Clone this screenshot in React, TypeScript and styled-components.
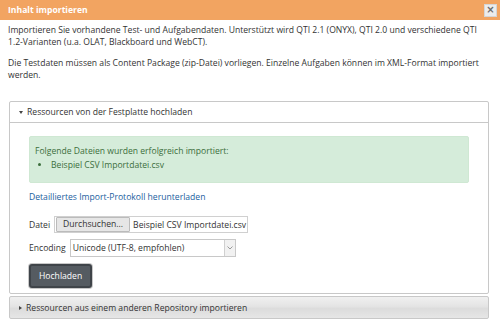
import React from "react";
import styled, { createGlobalStyle } from "styled-components";

const Global = createGlobalStyle`
  html, body { margin: 0; padding: 0; background: #fff; }
  body { font-family: "Open Sans", "DejaVu Sans", sans-serif; font-size: 8.6px; color: #333; }
`;

const Dialog = styled.div`
  width: 500px;
  height: 331px;
  background: #fff;
  overflow: hidden;
`;

const Header = styled.div`
  height: 20px;
  background: #f2a461;
  display: flex;
  align-items: center;
  justify-content: space-between;
  padding: 0 3px 0 8px;
`;

const Title = styled.h3`
  margin: 0;
  font-size: 8.6px;
  font-weight: 700;
  color: #fff;
  line-height: 20px;
`;

const CloseBtn = styled.button`
  width: 13px;
  height: 13px;
  padding: 0;
  border: 1px solid #d6d6d6;
  background: #ececec;
  color: #6a6a6a;
  font-size: 10px;
  font-weight: 700;
  line-height: 10px;
  font-family: "DejaVu Sans", sans-serif;
  display: flex;
  align-items: center;
  justify-content: center;
`;

const Body = styled.div`
  padding: 4px 8px 0 8px;
`;

const Para = styled.p`
  margin: 0 0 9px 0;
  line-height: 12px;
`;

const Panel = styled.div<{ $collapsed?: boolean }>`
  margin: ${(p) => (p.$collapsed ? "2px 3px 0 1px" : "20px 3px 0 1px")};
  border: 1px solid #c8c8c8;
  border-radius: 2px;
  background: ${(p) =>
    p.$collapsed ? "linear-gradient(#f0f0f0, #e4e4e4 45%, #dcdcdc 55%, #e6e6e6)" : "#fff"};
`;

const PanelHead = styled.div<{ $collapsed?: boolean }>`
  height: ${(p) => (p.$collapsed ? "21px" : "20px")};
  display: flex;
  align-items: center;
  gap: 4px;
  padding: 0 9px;
  border-bottom: ${(p) => (p.$collapsed ? "none" : "1px solid #c8c8c8")};
  color: #333;
`;

const Caret = styled.span<{ $right?: boolean }>`
  display: inline-block;
  width: 0;
  height: 0;
  ${(p) =>
    p.$right
      ? `border-top: 2.5px solid transparent; border-bottom: 2.5px solid transparent; border-left: 3px solid #444;`
      : `border-left: 2.5px solid transparent; border-right: 2.5px solid transparent; border-top: 3px solid #444;`}
`;

const PanelBody = styled.div`
  padding: 13px 19px 5px 19px;
`;

const Alert = styled.div`
  background: #d5ecda;
  border: 1px solid #cfe8d3;
  border-radius: 2px;
  color: #3c6e3c;
  padding: 7px 4px 10px 5px;
  line-height: 14px;
`;

const AlertList = styled.ul`
  margin: 0;
  padding-left: 16px;
  list-style: disc;
`;

const Link = styled.a`
  display: block;
  margin-top: 7px;
  color: #215e9e;
  text-decoration: none;
  line-height: 14px;
`;

const FormRow = styled.div<{ $top: number }>`
  display: flex;
  align-items: center;
  gap: 4px;
  margin-top: ${(p) => p.$top}px;
`;

const Label = styled.span`
  color: #333;
`;

const FileBox = styled.div`
  display: flex;
  align-items: center;
  height: 15px;
  border: 1px solid #d0d0d0;
  padding: 0 1px 0 1px;
  gap: 3px;
  background: #fff;
`;

const FileButton = styled.span`
  height: 13px;
  line-height: 13px;
  padding: 0 6px;
  background: #e6e6e6;
  border: 1px solid #bbb;
  border-radius: 1px;
  color: #333;
`;

const Select = styled.div`
  width: 162px;
  height: 16px;
  border: 1px solid #c8c8c8;
  display: flex;
  align-items: center;
  justify-content: space-between;
  padding-left: 2px;
  background: #fff;
`;

const SelectArrow = styled.span`
  width: 10px;
  height: 16px;
  border-left: 1px solid #d0d0d0;
  background: #f1f1f1;
  display: flex;
  align-items: center;
  justify-content: center;
`;

const SubmitBtn = styled.button`
  margin-top: 7px;
  height: 24px;
  padding: 0 8px;
  background: #555b61;
  color: #fff;
  font-family: "Open Sans", sans-serif;
  font-size: 8.6px;
  border: 2px solid #3f4449;
  border-radius: 3px;
  box-shadow: 0 0 0 1px #c8c8c8;
`;

export default function App() {
  return (
    <Dialog>
      <Global />
      <Header>
        <Title>Inhalt importieren</Title>
        <CloseBtn aria-label="close">×</CloseBtn>
      </Header>
      <Body>
        <Para>
          Importieren Sie vorhandene Test- und Aufgabendaten. Unterstützt wird QTI 2.1 (ONYX), QTI 2.0 und verschiedene QTI
          1.2-Varianten (u.a. OLAT, Blackboard und WebCT).
        </Para>
        <Para>
          Die Testdaten müssen als Content Package (zip-Datei) vorliegen. Einzelne Aufgaben können im XML-Format importiert
          werden.
        </Para>
        <Panel>
          <PanelHead>
            <Caret />
            <span>Ressourcen von der Festplatte hochladen</span>
          </PanelHead>
          <PanelBody>
            <Alert>
              Folgende Dateien wurden erfolgreich importiert:
              <AlertList>
                <li>Beispiel CSV Importdatei.csv</li>
              </AlertList>
            </Alert>
            <Link href="#">Detailliertes Import-Protokoll herunterladen</Link>
            <FormRow $top={12}>
              <Label>Datei</Label>
              <FileBox>
                <FileButton>Durchsuchen...</FileButton>
                <span>Beispiel CSV Importdatei.csv</span>
              </FileBox>
            </FormRow>
            <FormRow $top={6}>
              <Label>Encoding</Label>
              <Select>
                <span>Unicode (UTF-8, empfohlen)</span>
                <SelectArrow>
                  <svg width="6" height="4" viewBox="0 0 6 4">
                    <path d="M0.5 0.5 L3 3 L5.5 0.5" fill="none" stroke="#999" strokeWidth="1" />
                  </svg>
                </SelectArrow>
              </Select>
            </FormRow>
            <SubmitBtn>Hochladen</SubmitBtn>
          </PanelBody>
        </Panel>
        <Panel $collapsed>
          <PanelHead $collapsed>
            <Caret $right />
            <span>Ressourcen aus einem anderen Repository importieren</span>
          </PanelHead>
        </Panel>
      </Body>
    </Dialog>
  );
}
